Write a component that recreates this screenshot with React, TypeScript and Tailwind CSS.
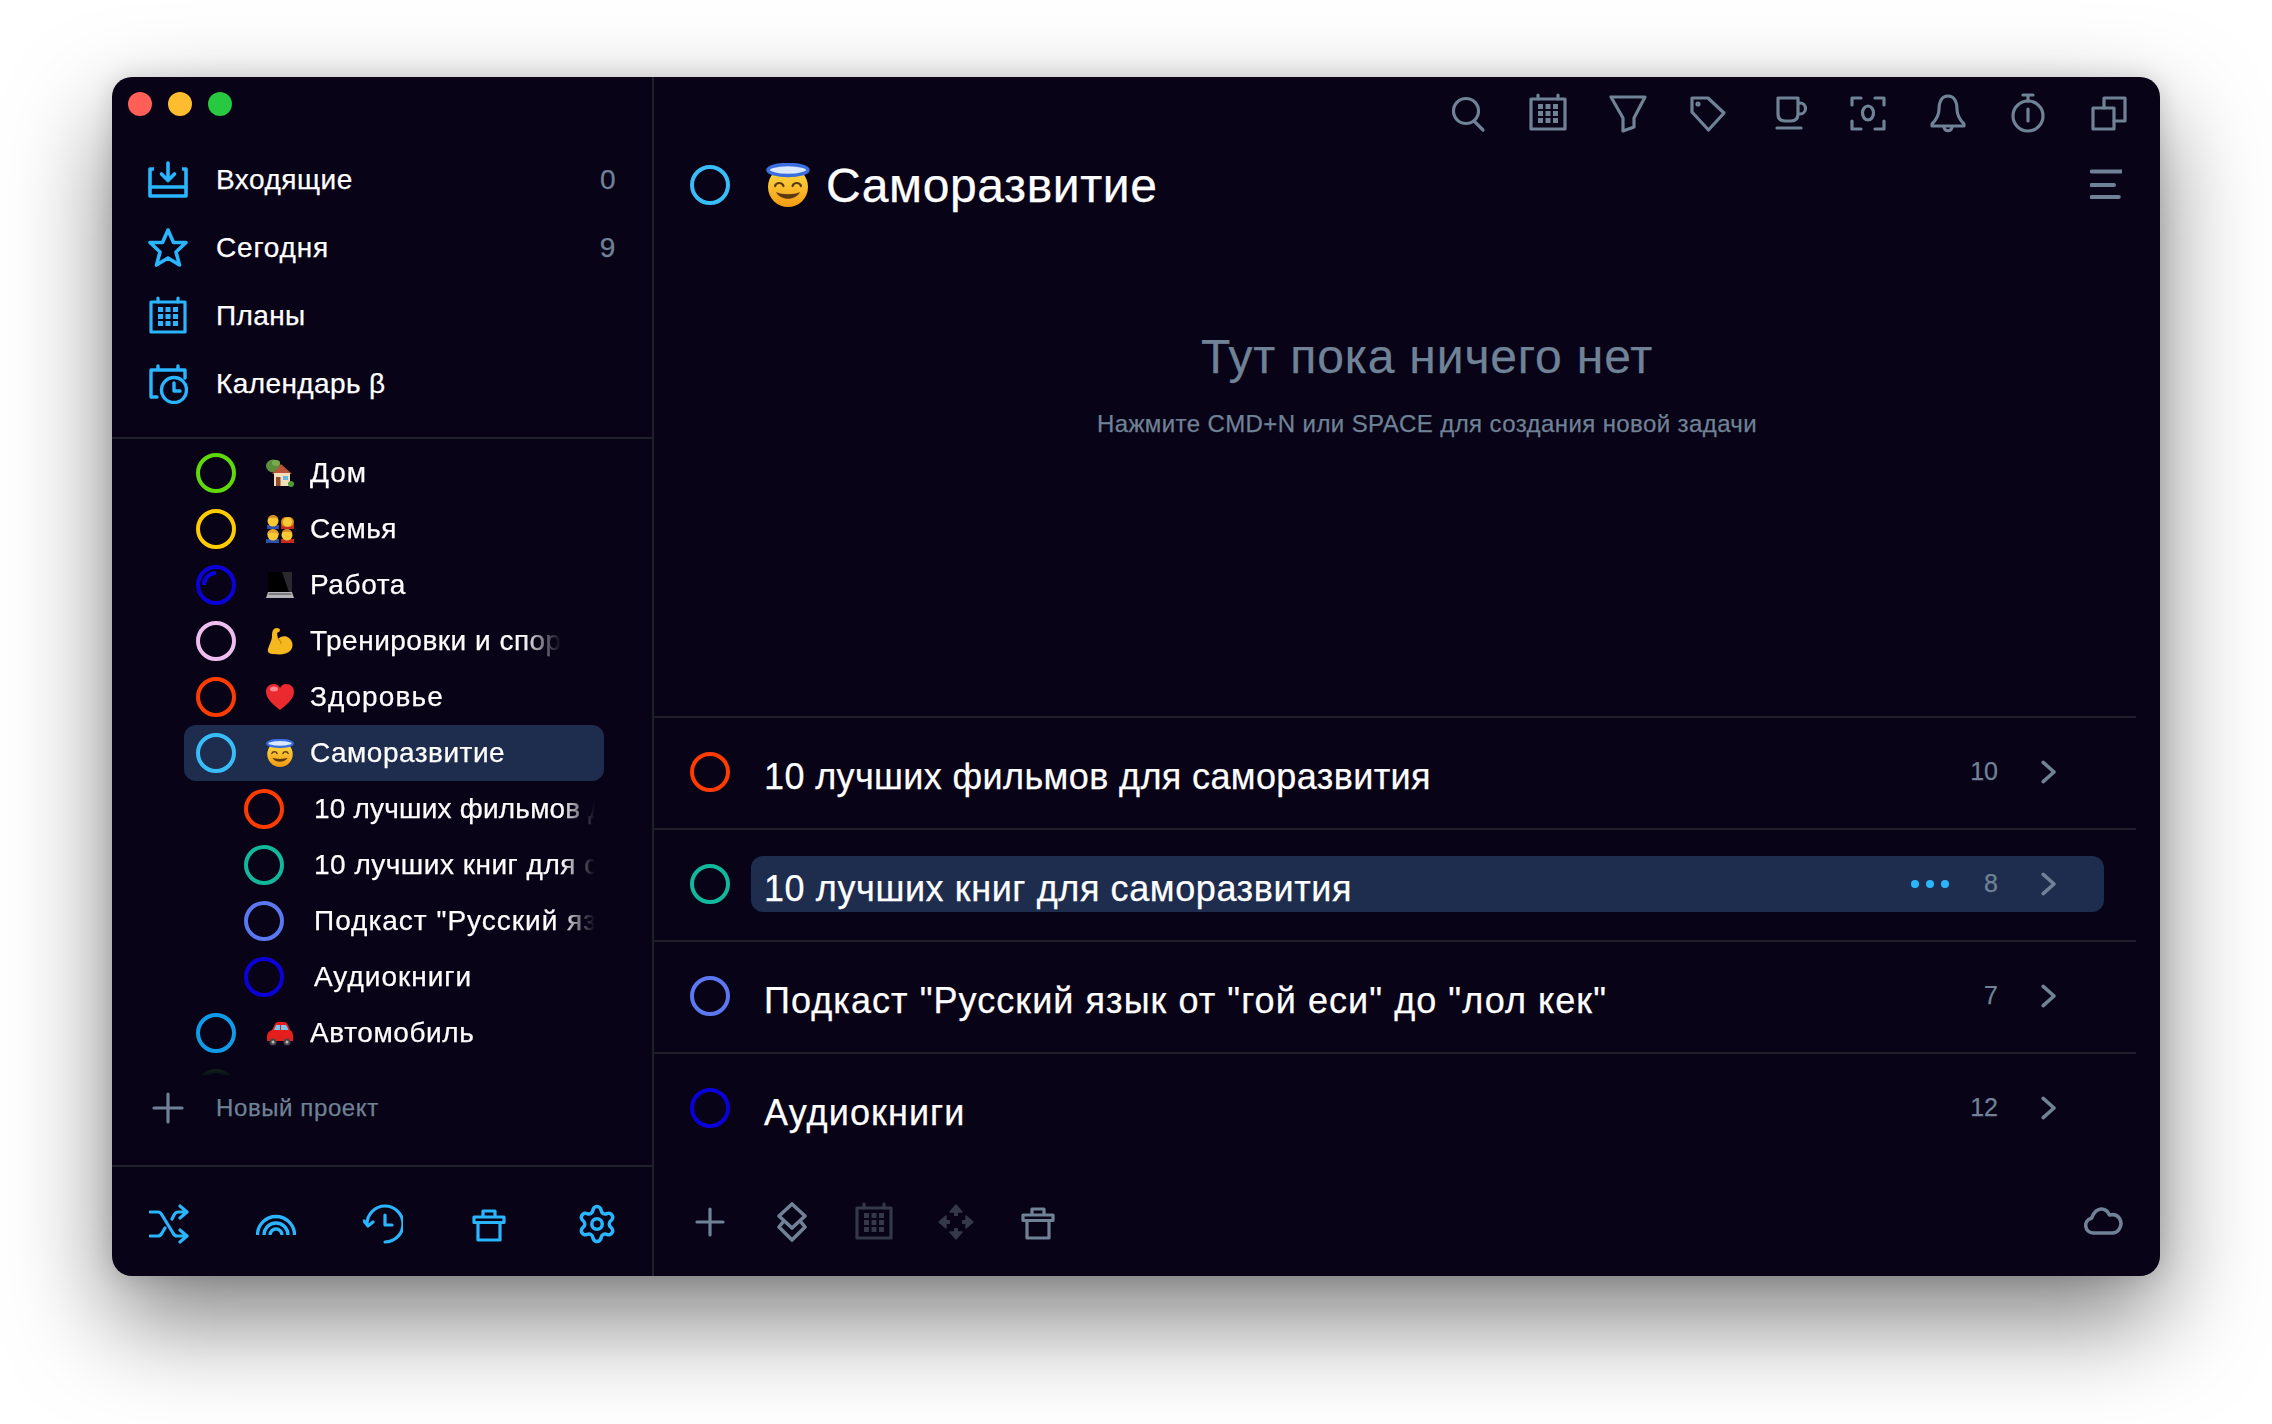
import React from 'react';
import { Settings } from 'lucide-react';

const FONT = { fontFamily: '"Liberation Sans", Arial, sans-serif' };

const Ico = ({ size = 40, children, className = '', strokeWidth = 3.2 }: { size?: number; children: React.ReactNode; className?: string; strokeWidth?: number }) => (
  <svg width={size} height={size} viewBox="0 0 40 40" fill="none" stroke="currentColor" strokeWidth={strokeWidth} strokeLinecap="round" strokeLinejoin="round" className={className}>
    {children}
  </svg>
);

const CalendarGrid = () => (
  <>
    <path d="M3 6h34v30H3z" />
    <path d="M10 2v4M30 2v4" />
    <g fill="currentColor" stroke="none">
      {[11, 18, 25].map((y) =>
        [10, 17.5, 25].map((x) => <rect key={`${x}-${y}`} x={x} y={y} width="5" height="5" />),
      )}
    </g>
  </>
);

const TrashIcon = () => <path d="M5 13h30v5.500H5zM9 18.500V36h22V18.500M14 13V7h12v6" />;

const navItems = [
  {
    label: 'Входящие',
    count: '0',
    track: 'tracking-[0.5px]',
    icon: (
      <Ico strokeWidth={3.6}>
        <path d="M6 9H2v27h36V9h-4" strokeLinecap="butt" />
        <path d="M2 27h36" />
        <path d="M20 3v17M13.500 14l6.500 6.500 6.500-6.500" />
      </Ico>
    ),
  },
  {
    label: 'Сегодня',
    count: '9',
    track: 'tracking-[0.8px]',
    icon: (
      <Ico strokeWidth={3.6}>
        <path d="M20 2l5.500 12.500H38l-10 9.500 3.500 13L20 30 8.500 37l3.500-13-10-9.500h12.500z" />
      </Ico>
    ),
  },
  {
    label: 'Планы',
    track: 'tracking-[0.4px]',
    icon: (
      <Ico>
        <CalendarGrid />
      </Ico>
    ),
  },
  {
    label: 'Календарь β',
    track: 'tracking-[0.4px]',
    icon: (
      <Ico strokeWidth={3.4}>
        <path d="M3 33V6h34v8M10 2v4M30 2v4M3 33h6" />
        <circle cx="26" cy="26" r="12.500" />
        <path d="M26 19v8h6" />
      </Ico>
    ),
  },
];

const House = ({ size }: { size: number }) => (
  <svg width={size} height={size} viewBox="0 0 28 28">
    <ellipse cx="7" cy="7" rx="7" ry="6.500" fill="#5c8f3c" />
    <ellipse cx="10" cy="4" rx="4" ry="3" fill="#79ab4e" />
    <path d="M6 15l9-10 11 10z" fill="#b9553a" />
    <rect x="8" y="14" width="16" height="13" fill="#f3dfb8" />
    <rect x="10" y="18" width="4.500" height="9" fill="#8d4a2c" />
    <rect x="17" y="17" width="5" height="4" fill="#67b6e8" />
    <circle cx="25" cy="25" r="3" fill="#4f9a38" />
  </svg>
);

const Family = ({ size }: { size: number }) => (
  <svg width={size} height={size} viewBox="0 0 28 28">
    <rect x="1" y="10" width="12" height="4" fill="#2d4fae" />
    <rect x="15" y="9" width="13" height="5" fill="#c8281f" />
    <circle cx="7" cy="6" r="5.500" fill="#f9c935" />
    <path d="M2 4a5 4 0 0 1 10 0l-2-1H4z" fill="#d98f23" />
    <rect x="15" y="2" width="13" height="10" rx="5" fill="#d98f23" />
    <circle cx="21.500" cy="7" r="4.500" fill="#f9c935" />
    <rect x="0" y="24" width="13" height="4" fill="#2d4fae" />
    <rect x="15" y="24" width="13" height="4" fill="#c8281f" />
    <circle cx="7" cy="20" r="5.500" fill="#f9c935" />
    <path d="M1 20a6 6 0 0 1 12 0l-3-2H4z" fill="#e3a72e" />
    <circle cx="21" cy="20" r="5.500" fill="#f9c935" />
    <path d="M16 18a5 4 0 0 1 10 0l-2-1h-6z" fill="#d98f23" />
  </svg>
);

const Laptop = ({ size }: { size: number }) => (
  <svg width={size} height={size} viewBox="0 0 28 28">
    <path d="M2 1h24v20H2z" fill="#000" />
    <path d="M16 1h10v20h-3z" fill="#2a2a2e" />
    <path d="M2 21h24l2 6H0z" fill="#b4b4b9" />
    <path d="M3 22h22l1 2H2z" fill="#7c7c81" />
  </svg>
);

const Muscle = ({ size }: { size: number }) => (
  <svg width={size} height={size} viewBox="0 0 28 28">
    <path d="M8 2c2-2 6-1 6 1 0 2-2 2-3 3l1 6c2-3 8-4 11-1 4 3 5 9 1 13-3 3-9 4-16 3-5 0-7-2-6-5 2-6 4-9 4-13 0-3 0-5 2-7z" fill="#f5b81f" />
    <path d="M12 12c2 1 3 3 3 5" fill="none" stroke="#c98a0c" strokeWidth="1.200" />
  </svg>
);

const Heart = ({ size }: { size: number }) => (
  <svg width={size} height={size} viewBox="0 0 28 28">
    <path d="M14 27C5 20 0 15 0 8.500 0 4 3.500 1 7.500 1 10.500 1 13 2.500 14 5c1-2.500 3.500-4 6.500-4C24.500 1 28 4 28 8.500 28 15 23 20 14 27z" fill="#ea2a2e" />
    <ellipse cx="8" cy="6" rx="4" ry="2.500" fill="#ff8a8a" />
  </svg>
);

const Halo = ({ size }: { size: number }) => (
  <svg width={size} height={size} viewBox="0 0 44 44">
    <defs>
      <linearGradient id="haloFace" x1="0" y1="0" x2="0" y2="1">
        <stop offset="0" stopColor="#ffe14a" />
        <stop offset="1" stopColor="#f29a12" />
      </linearGradient>
    </defs>
    <circle cx="22" cy="24" r="20" fill="url(#haloFace)" />
    <path d="M9 23c1.500-4 7-4 8.500 0M26.500 23c1.500-4 7-4 8.500 0" fill="none" stroke="#5b3a12" strokeWidth="2.200" strokeLinecap="round" />
    <path d="M10 29c4 9 20 9 24 0-6 3-18 3-24 0z" fill="#5b3a12" />
    <ellipse cx="22" cy="7" rx="20" ry="5.500" fill="#dbe8ff" stroke="#3a6fe0" strokeWidth="3.500" />
  </svg>
);

const Car = ({ size }: { size: number }) => (
  <svg width={size} height={size} viewBox="0 0 28 28">
    <path d="M1 17c0-3 2-5 5-6l3-6c.5-1 1.500-2 3-2h6c2 0 3 1 4 3l2 5c2 1 3 3 3 5v6H1z" fill="#e3201b" />
    <path d="M10 6h4v5H8zM15 6h4c1 0 1.500 .5 2 1.500l1.500 3.500H15z" fill="#7cc4ec" />
    <circle cx="7" cy="23" r="3.500" fill="#46464c" />
    <circle cx="21" cy="23" r="3.500" fill="#46464c" />
    <circle cx="7" cy="23" r="1.500" fill="#b5b5b8" />
    <circle cx="21" cy="23" r="1.500" fill="#b5b5b8" />
  </svg>
);

const Circle = ({ color, size = 40, arc = false }: { color: string; size?: number; arc?: boolean }) => (
  <svg width={size} height={size} viewBox="0 0 40 40" fill="none" className="shrink-0">
    <circle cx="20" cy="20" r="18" stroke={color} strokeWidth="4" />
    {arc && <path d="M8 20A12 12 0 0 1 20 8" stroke={color} strokeWidth="4" />}
  </svg>
);

type Project = { name: string; color: string; track: string; emoji?: React.ReactNode; arc?: boolean; child?: boolean; active?: boolean };

const projects: Project[] = [
  { name: 'Дом', color: '#5fd90a', track: 'tracking-[1px]', emoji: <House size={28} /> },
  { name: 'Семья', color: '#ffcc00', track: 'tracking-[0.4px]', emoji: <Family size={28} /> },
  { name: 'Работа', color: '#0c00d8', track: 'tracking-[0.6px]', emoji: <Laptop size={28} />, arc: true },
  { name: 'Тренировки и спорт', color: '#f0bdf0', track: 'tracking-[0.5px]', emoji: <Muscle size={28} /> },
  { name: 'Здоровье', color: '#ff3b00', track: 'tracking-[1.1px]', emoji: <Heart size={28} /> },
  { name: 'Саморазвитие', color: '#38bdf8', track: 'tracking-[0.5px]', emoji: <Halo size={28} />, active: true },
  { name: '10 лучших фильмов для саморазвития', color: '#ff3b00', track: 'tracking-[0.2px]', child: true },
  { name: '10 лучших книг для саморазвития', color: '#12b89c', track: 'tracking-[0.5px]', child: true },
  { name: 'Подкаст "Русский язык от "гой еси"', color: '#5b78f0', track: 'tracking-[1px]', child: true },
  { name: 'Аудиокниги', color: '#0c00d8', track: 'tracking-[1px]', child: true },
  { name: 'Автомобиль', color: '#0f9be8', track: 'tracking-[0.6px]', emoji: <Car size={28} /> },
  { name: '', color: '#14401c', track: '' },
];

const tasks = [
  { title: '10 лучших фильмов для саморазвития', count: '10', color: '#ff3b00', track: 'tracking-[0.38px]' },
  { title: '10 лучших книг для саморазвития', count: '8', color: '#12b89c', track: 'tracking-[0.6px]', active: true },
  { title: 'Подкаст "Русский язык от "гой еси" до "лол кек"', count: '7', color: '#5b78f0', track: 'tracking-[1.06px]' },
  { title: 'Аудиокниги', count: '12', color: '#0c00d8', track: 'tracking-[1.1px]' },
];

const topIcons = [
  <><circle cx="18" cy="18" r="12.500" /><path d="M26 28l9 9" /></>,
  <CalendarGrid />,
  <path d="M3 4h34L26 25v9l-11 4V25z" />,
  <><path d="M4 5h16l16 15-15.500 17L4 19z" /><circle cx="10" cy="11" r="1" fill="currentColor" /></>,
  <path d="M10 5h20v16c0 5-3 7-7 7h-6c-4 0-7-2-7-7zM30 10h2a5 5 0 0 1 0 11h-2M9 35h24" />,
  <><path d="M4 12V5h9M27 5h9v7M4 28v8h9M27 36h9v-8" /><ellipse cx="20" cy="20" rx="5.500" ry="7" /></>,
  <><path d="M20 3c7 0 9 7 9 13 0 7 3 11 7 15v2H4v-2c4-4 7-8 7-15 0-6 2-13 9-13z" /><path d="M16 34c0 5 8 5 8 0" /></>,
  <><ellipse cx="20" cy="23" rx="15" ry="15" /><path d="M15 2h10M20 2v6M20 16v12" /></>,
  <><path d="M16 15V5h21v23H26" /><path d="M5 15h21v21H5z" /></>,
];

const sideBottom = [
  <path d="M1 8h8c2 0 3 1 4 3l11 18c1 2 2 3 4 3h9M1 32h8c2 0 3-1 4-3l3-5M23 15l2-4c1-2 2-3 4-3h8M31 2l7 6-7 6M31 26l7 6-7 6" />,
  <path d="M1.500 31a18.500 18.500 0 0 1 37 0M8 31a12 12 0 0 1 24 0M14 31a6 6 0 0 1 12 0" strokeLinecap="butt" strokeWidth="3.400" />,
  <><path d="M4 20A18 18 0 1 1 22 38" /><path d="M1 17l4 5 5-4" /><path d="M22 11v10h7" /></>,
  <TrashIcon />,
  <Settings size={42} strokeWidth={2} />,
];

const App = () => (
  <div className="relative w-[2272px] h-[1424px] overflow-hidden bg-white pl-[112px] pt-[77px] [-webkit-text-stroke:0.25px_currentColor]" style={FONT}>
    <div className="flex w-[2048px] h-[1199px] rounded-[20px] overflow-hidden bg-[#090317] shadow-[0_44px_100px_rgba(0,0,0,0.5),0_0_24px_rgba(0,0,0,0.14)] text-white">
      <aside className="flex flex-col w-[542px] shrink-0 border-r-2 border-[#20202c]">
        <div className="flex gap-4 pl-4 pt-[15px] h-[69px]">
          <span className="w-6 h-6 rounded-full bg-[#ff5f57]" />
          <span className="w-6 h-6 rounded-full bg-[#febc2e]" />
          <span className="w-6 h-6 rounded-full bg-[#28c840]" />
        </div>
        <nav className="pb-[19px] border-b-2 border-[#20202c]">
          {navItems.map((n) => (
            <div key={n.label} className={`flex items-center h-[68px] pl-9 pr-[36px] gap-[28px] text-[28px] ${n.track}`}>
              <span className="text-[#29b6ff] w-10 h-10">{n.icon}</span>
              <span className="flex-1">{n.label}</span>
              {n.count && <span className="text-[#6f8296]">{n.count}</span>}
            </div>
          ))}
        </nav>
        <div className="h-[636px] overflow-hidden pt-[6px] pl-[72px] pr-[48px] shrink-0 [mask-image:linear-gradient(to_bottom,black_96.500%,rgba(0,0,0,0.3))]">
          {projects.map((p, i) => (
            <div key={i} className={`flex items-center h-[56px] rounded-[12px] text-[28px] ${p.track} ${p.active ? 'bg-[#1e2d4e]' : ''} ${p.child ? 'pl-[60px] gap-[30px]' : 'pl-3'}`}>
              <Circle color={p.color} arc={p.arc} />
              {p.child ? (
                <span className="w-[281px] overflow-hidden whitespace-nowrap [mask-image:linear-gradient(to_right,black_88%,transparent)]">{p.name}</span>
              ) : (
                <>
                  <span className="flex ml-[30px] mr-[16px] w-7 h-7 shrink-0">{p.emoji}</span>
                  <span className="w-[251px] overflow-hidden whitespace-nowrap [mask-image:linear-gradient(to_right,black_85%,transparent)]">{p.name}</span>
                </>
              )}
            </div>
          ))}
        </div>
        <div className="flex items-center h-[66px] pl-9 gap-[28px] text-[24px] tracking-[0.6px] text-[#6f8296]">
          <span className="w-10 h-10">
            <Ico><path d="M20 6v28M6 20h28" /></Ico>
          </span>
          Новый проект
        </div>
        <div className="mt-[24px] pt-[5px] flex-1 flex items-center justify-between border-t-2 border-[#20202c] pl-[37px] pr-[34px] text-[#29b6ff]">
          {sideBottom.map((ic, i) => (
            i === 4 ? <span key={i} className="flex">{ic}</span> : <Ico key={i}>{ic}</Ico>
          ))}
        </div>
      </aside>

      <main className="flex flex-col flex-1 min-w-0">
        <div className="flex justify-end gap-10 pt-[16px] pr-[32px] h-[76px] text-[#6f8296]">
          {topIcons.map((ic, i) => (
            <Ico key={i}>{ic}</Ico>
          ))}
        </div>
        <div className="flex items-center h-[64px] pl-[36px] pr-[38px]">
          <Circle color="#38bdf8" />
          <span className="ml-[36px] mr-[16px] flex"><Halo size={44} /></span>
          <h1 className="flex-1 text-[48px] font-normal tracking-[0.6px] pt-[2px]">Саморазвитие</h1>
          <span className="text-[#6f8296]">
            <Ico size={32} strokeWidth={5}><path d="M2 3h37M2 20h28M2 35h34" /></Ico>
          </span>
        </div>
        <div className="flex-1 flex flex-col items-center text-[#6f8296] pl-[40px]">
          <p className="mt-[112px] text-[48px] leading-[56px] tracking-[0.85px]">Тут пока ничего нет</p>
          <p className="mt-[24px] text-[24px] leading-[30px] tracking-[0.4px]">Нажмите CMD+N или SPACE для создания новой задачи</p>
        </div>
        <div className="mr-[24px]">
          {tasks.map((t) => (
            <div key={t.title} className="flex items-center h-[112px] pb-[2px] border-t-2 border-[#20202c] pl-[36px] pr-[32px]">
              <Circle color={t.color} />
              <div className={`flex items-center flex-1 ml-[21px] h-[56px] rounded-[12px] pl-[13px] pr-[44px] ${t.active ? 'bg-[#1e2d4e]' : ''}`}>
                <span className={`flex-1 text-[36px] pt-[10px] ${t.track}`}>{t.title}</span>
                {t.active && (
                  <span className="flex gap-[7px] mr-[35px]">
                    <i className="w-2 h-2 rounded-full bg-[#29b6ff]" />
                    <i className="w-2 h-2 rounded-full bg-[#29b6ff]" />
                    <i className="w-2 h-2 rounded-full bg-[#29b6ff]" />
                  </span>
                )}
                <span className="text-[25px] text-[#6f8296]">{t.count}</span>
                <span className="text-[#6f8296] ml-[38px]">
                  <Ico size={24} strokeWidth={6}><path d="M12 4l18 16-18 16" /></Ico>
                </span>
              </div>
            </div>
          ))}
        </div>
        <div className="flex items-center h-[112px] pt-[4px] pl-[36px] pr-[36px] gap-[42px] text-[#6f8296]">
          <Ico><path d="M7 20h26M20 7v26" /></Ico>
          <Ico strokeWidth={3.6}><path d="M20 2l13 12-13 12L7 14zM11 20l-4 5 13 13 13-13-4-5" /></Ico>
          <span className="text-[#343849]">
            <Ico><CalendarGrid /></Ico>
          </span>
          <span className="text-[#343849]">
            <Ico strokeWidth={1.5}>
              <path d="M20 10v4M20 26v4M10 20h4M26 20h4" strokeWidth="4" strokeLinecap="butt" />
              <path d="M20 3l6 7H14zM20 37l6-7H14zM3 20l7-6v12zM37 20l-7-6v12z" fill="currentColor" />
            </Ico>
          </span>
          <Ico><TrashIcon /></Ico>
          <span className="ml-auto">
            <Ico strokeWidth={3.6}><path d="M9 31a7.500 7.500 0 0 1-1.500-14.800C9.500 10 14 6.500 18 7c3.500 .3 6 2.500 7.500 6 5-1 8 0 10 3.500 2.500 4 1.500 7.500 0 10-1.500 3-4 4.500-7.500 4.500z" /></Ico>
          </span>
        </div>
      </main>
    </div>
  </div>
);

export default App;
